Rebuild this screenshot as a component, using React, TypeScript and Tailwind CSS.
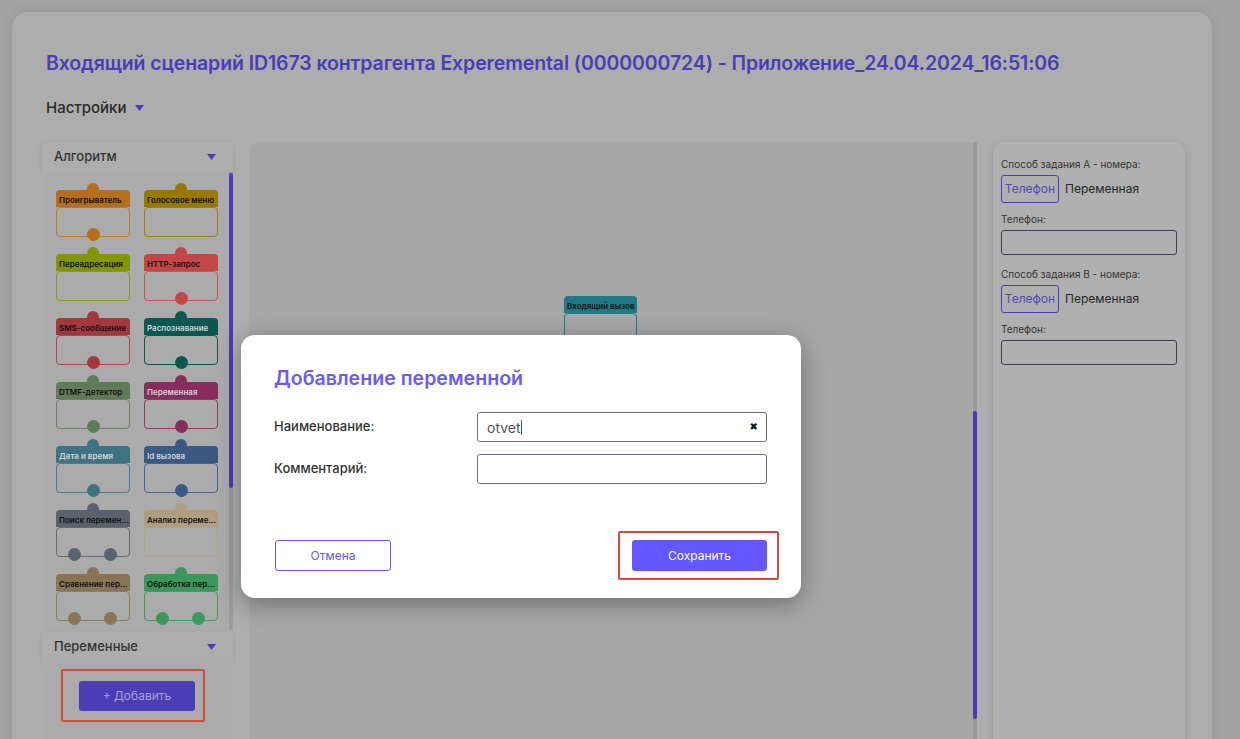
import React from 'react';

type N = { t: string; bg: string; bd: string; light?: boolean; out: number };

const nodes: N[] = [
  { t: 'Проигрыватель', bg: 'bg-[#b46e1c]', bd: 'border-[#bd7a2a]', out: 1 },
  { t: 'Голосовое меню', bg: 'bg-[#977800]', bd: 'border-[#9e8210]', out: 0 },
  { t: 'Переадресация', bg: 'bg-[#839500]', bd: 'border-[#8a9a10]', out: 0 },
  { t: 'HTTP-запрос', bg: 'bg-[#c44646]', bd: 'border-[#c95454]', out: 1 },
  { t: 'SMS-сообщение', bg: 'bg-[#a2383e]', bd: 'border-[#ac484e]', out: 1 },
  { t: 'Распознавание', bg: 'bg-[#0c5752]', bd: 'border-[#0c5752]', light: true, out: 1 },
  { t: 'DTMF-детектор', bg: 'bg-[#607b58]', bd: 'border-[#6a8462]', out: 1 },
  { t: 'Переменная', bg: 'bg-[#882c5b]', bd: 'border-[#903965]', light: true, out: 1 },
  { t: 'Дата и время', bg: 'bg-[#3d7383]', bd: 'border-[#497e8d]', light: true, out: 1 },
  { t: 'Id вызова', bg: 'bg-[#3a5983]', bd: 'border-[#46638b]', light: true, out: 1 },
  { t: 'Поиск перемен...', bg: 'bg-[#5c616e]', bd: 'border-[#676b77]', out: 2 },
  { t: 'Анализ переме...', bg: 'bg-[#b09e80]', bd: 'border-[#b4a386]', out: 0 },
  { t: 'Сравнение пер...', bg: 'bg-[#897456]', bd: 'border-[#907c5f]', out: 2 },
  { t: 'Обработка пер...', bg: 'bg-[#3a985b]', bd: 'border-[#3e9d5f]', out: 2 },
];

function Tri() {
  return (
    <svg width="9" height="6" viewBox="0 0 9 6" className="shrink-0">
      <polygon points="0,0 9,0 4.5,6" fill="#4a3db5" />
    </svg>
  );
}

function Node({ n }: { n: N }) {
  return (
    <div className="relative w-[74px]">
      <span className={`absolute left-[31px] top-[-7px] h-[12px] w-[12px] rounded-full ${n.bg}`} />
      <div
        className={`relative h-[17px] rounded-t-[4px] px-[3px] pt-[5px] text-[8px] leading-[10px] font-semibold whitespace-nowrap overflow-hidden ${n.bg} ${
          n.light ? 'text-[#d4d4d8]' : 'text-[#111111]'
        }`}
      >
        {n.t}
      </div>
      <div className={`h-[30px] rounded-[4px] border ${n.bd}`} />
      {n.out === 1 && (
        <span className={`absolute left-[31px] bottom-[-4px] h-[13px] w-[13px] rounded-full ${n.bg}`} />
      )}
      {n.out === 2 && (
        <>
          <span className={`absolute left-[12px] bottom-[-4px] h-[13px] w-[13px] rounded-full ${n.bg}`} />
          <span className={`absolute left-[48px] bottom-[-4px] h-[13px] w-[13px] rounded-full ${n.bg}`} />
        </>
      )}
    </div>
  );
}

function Toggle() {
  return (
    <div className="flex items-center gap-[6px] mt-[5px]">
      <div className="h-[28px] w-[58px] flex items-center justify-center rounded-[3px] border border-[#4a3db5] text-[12px] text-[#5448b4]">
        Телефон
      </div>
      <span className="text-[12px] text-[#262626]">Переменная</span>
    </div>
  );
}

export default function App() {
  return (
    <div className="relative h-[739px] w-[1240px] overflow-hidden bg-[#a3a3a3] font-['Inter',sans-serif]">
      <div className="ml-[12px] mt-[12px] h-[800px] w-[1200px] rounded-[16px] bg-[#adadad] shadow-[0_0_14px_rgba(0,0,0,0.08)] pl-[30px] pr-[27px] pt-[37px]">
        <h1 className="ml-[4px] text-[19.5px] leading-[28px] font-semibold text-[#4a3db5] whitespace-nowrap tracking-[-0.1px]">
          Входящий сценарий ID1673 контрагента Experemental (0000000724) - Приложение_24.04.2024_16:51:06
        </h1>
        <div className="ml-[4px] mt-[21px] flex items-center gap-[9px] h-[20px]">
          <span className="text-[15px] text-[#2a2a2a] font-medium">Настройки</span>
          <Tri />
        </div>

        <div className="mt-[24px] flex gap-[16px]">
          {/* left panel */}
          <div className="w-[191px] flex flex-col">
            <div className="h-[30px] flex items-center justify-between pl-[12px] pr-[17px] bg-[#adadad] shadow-[0_1px_4px_rgba(0,0,0,0.12)]">
              <span className="text-[13px] font-medium text-[#333333]">Алгоритм</span>
              <Tri />
            </div>
            <div className="flex h-[458px] bg-[#ababab]">
              <div className="flex-1 grid grid-cols-[74px_74px] gap-x-[14px] gap-y-[17px] pl-[14px] pt-[18px] content-start">
                {nodes.map((n) => (
                  <Node key={n.t} n={n} />
                ))}
              </div>
              <div className="w-[4px] bg-[#9c9c9c] flex flex-col">
                <div className="h-[315px] w-[4px] rounded-[2px] bg-[#4a3db5] mt-[1px]" />
              </div>
            </div>
            <div className="mt-[2px] h-[30px] flex items-center justify-between pl-[12px] pr-[17px] bg-[#adadad] shadow-[0_1px_4px_rgba(0,0,0,0.12)]">
              <span className="text-[13px] font-medium text-[#333333]">Переменные</span>
              <Tri />
            </div>
            <div className="flex-1 bg-[#ababab] pl-[37px] pt-[19px] h-[120px]">
              <div className="relative w-[116px]">
                <span className="absolute left-[-18px] right-[-10px] top-[-12px] bottom-[-11px] border-2 border-[#d64a3d] rounded-[2px]" />
                <div className="h-[30px] w-[116px] rounded-[3px] bg-[#4a3db5] flex items-center justify-center text-[12px] text-[#a7a3cf]">
                  + Добавить
                </div>
              </div>
            </div>
          </div>

          {/* canvas */}
          <div className="relative w-[728px] h-[640px] rounded-t-[10px] bg-[#a7a7a7] flex">
            <div className="relative flex-1">
              <div className="absolute left-[315px] top-[154px] w-[73px]">
                <div className="h-[17px] rounded-t-[4px] bg-[#1f7a86] px-[3px] pt-[5px] text-[8px] leading-[10px] font-semibold text-[#111111] whitespace-nowrap">
                  Входящий вызов
                </div>
                <div className="h-[30px] rounded-[4px] border border-[#1f7a86]" />
                <span className="absolute left-[30px] bottom-[-6px] h-[13px] w-[13px] rounded-full bg-[#1f7a86]" />
              </div>
            </div>
            <div className="w-[4px] bg-[#999999] flex flex-col">
              <div className="mt-[269px] h-[308px] w-[4px] rounded-[2px] bg-[#4a3db5]" />
            </div>
          </div>

          {/* right panel */}
          <div className="w-[192px] h-[640px] rounded-[10px] bg-[#b0b0b0] shadow-[0_2px_10px_rgba(0,0,0,0.12)] pl-[8px] pr-[8px] pt-[16px]">
            <div className="text-[10px] leading-[12px] text-[#333333]">Способ задания А - номера:</div>
            <Toggle />
            <div className="mt-[10px] text-[10px] leading-[12px] text-[#333333]">Телефон:</div>
            <div className="mt-[5px] h-[25px] w-[176px] rounded-[3px] border border-[#3c3c5a]" />
            <div className="mt-[13px] text-[10px] leading-[12px] text-[#333333]">Способ задания B - номера:</div>
            <Toggle />
            <div className="mt-[10px] text-[10px] leading-[12px] text-[#333333]">Телефон:</div>
            <div className="mt-[5px] h-[25px] w-[176px] rounded-[3px] border border-[#3c3c5a]" />
          </div>
        </div>
      </div>

      {/* modal */}
      <div className="absolute left-[241px] top-[335px] w-[560px] h-[263px] rounded-[14px] bg-white shadow-[0_6px_24px_rgba(0,0,0,0.35)] pl-[33px] pr-[34px] pt-[30px]">
        <h2 className="text-[19.6px] leading-[26px] font-semibold text-[#6b5cf6]">Добавление переменной</h2>
        <div className="mt-[21px] flex items-center">
          <span className="w-[203px] text-[13px] font-medium text-[#333333]">Наименование:</span>
          <div className="relative h-[30px] w-[290px] rounded-[3px] border border-[#6b6f80] flex items-center pl-[9px] pr-[8px]">
            <span className="text-[14px] text-[#555555]">otvet</span>
            <span className="h-[15px] w-px bg-[#2b4fd0]" />
            <span className="ml-auto text-[10px] leading-none text-[#111111] font-['DejaVu_Sans']">✖</span>
          </div>
        </div>
        <div className="mt-[12px] flex items-center">
          <span className="w-[203px] text-[13px] font-medium text-[#333333]">Комментарий:</span>
          <div className="h-[30px] w-[290px] rounded-[3px] border border-[#6b6f80]" />
        </div>
        <div className="mt-[56px] flex items-center justify-between">
          <div className="h-[31px] w-[116px] ml-[1px] rounded-[3px] border border-[#6655ff] flex items-center justify-center text-[12px] text-[#6655ff]">
            Отмена
          </div>
          <div className="relative">
            <span className="absolute left-[-14px] right-[-12px] top-[-9px] bottom-[-9px] border-2 border-[#d64a3d] rounded-[2px]" />
            <div className="h-[31px] w-[135px] rounded-[3px] bg-[#6457ff] flex items-center justify-center text-[12px] text-white">
              Сохранить
            </div>
          </div>
        </div>
      </div>
    </div>
  );
}
